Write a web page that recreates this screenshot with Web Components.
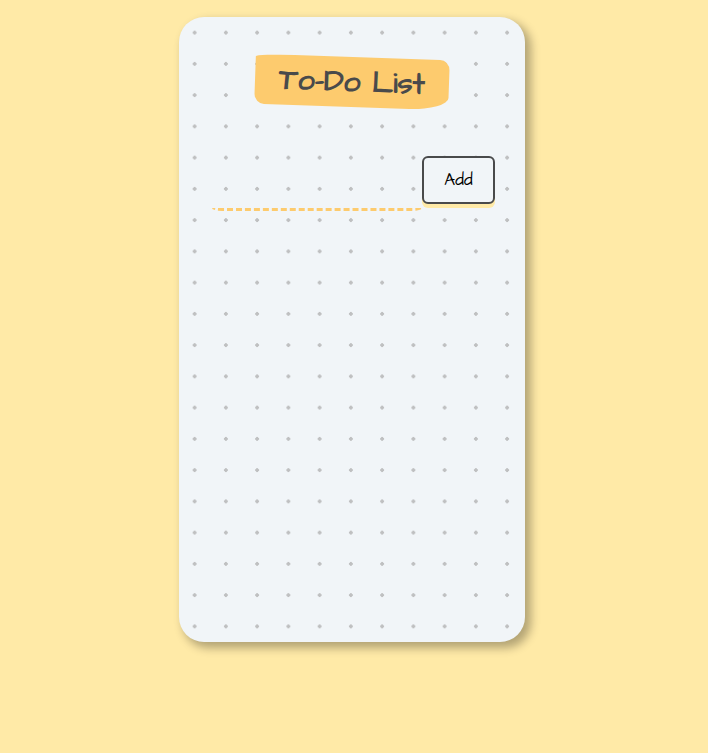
<!DOCTYPE html>
<html lang="en">
<head>
<meta charset="utf-8">
<meta name="viewport" content="width=device-width, initial-scale=1">
<title>To-Do List</title>
<style>
  body {
    margin: 0;
    min-height: 100vh;
    background: #ffeaa7;
    font-family: "Architects Daughter", "Patrick Hand", "Open Sans", sans-serif;
    color: #494a4b;
  }
</style>
</head>
<body>
<todo-app></todo-app>
<script>
  const define = (name, markup, setup) => {
    customElements.define(name, class extends HTMLElement {
      constructor() {
        super();
        this.attachShadow({ mode: 'open' }).innerHTML = markup;
        if (setup) setup(this);
      }
    });
  };

  define('todo-title', `
    <style>
      :host { display: flex; justify-content: center; }
      h1 {
        box-sizing: border-box;
        min-width: 194px;
        margin: 0;
        padding: 4px 20px;
        font-size: 30px;
        line-height: 42px;
        font-weight: 700;
        text-align: center;
        white-space: nowrap;
        background: #fdcb6e;
        border-radius: 20% 5% 20% 5% / 5% 20% 25% 20%;
        transform: rotate(2deg);
      }
    </style>
    <h1><slot></slot></h1>`);

  define('todo-form', `
    <style>
      :host { display: block; }
      form { display: flex; align-items: flex-start; padding-left: 3px; }
      input {
        box-sizing: border-box;
        flex: 1;
        min-width: 0;
        height: 55px;
        padding: 8px;
        border: 0;
        border-bottom: 3px dashed #fdcb6e;
        border-radius: 10px / 3px;
        outline: none;
        background: transparent;
        font: inherit;
        font-size: 20px;
        color: inherit;
      }
      button {
        box-sizing: border-box;
        width: 73px;
        height: 48px;
        padding: 0;
        border: 2px solid #494a4b;
        border-radius: 6px;
        background: #f1f5f8;
        box-shadow: 0 4px 0 #ffeaa7;
        font: inherit;
        font-size: 17px;
        color: #000;
        cursor: pointer;
      }
    </style>
    <form>
      <input type="text" aria-label="New task">
      <button type="submit">Add</button>
    </form>`, host => {
      const form = host.shadowRoot.querySelector('form');
      const input = form.querySelector('input');
      form.addEventListener('submit', event => {
        event.preventDefault();
        const text = input.value.trim();
        if (!text) return;
        host.dispatchEvent(new CustomEvent('add-task', { detail: text }));
        input.value = '';
      });
    });

  define('todo-app', `
    <style>
      :host { display: block; padding: 17px 20px 20px 16px; }
      main {
        --pitch: calc(125px / 4);
        box-sizing: border-box;
        max-width: 346px;
        min-height: 625px;
        margin: 0 auto;
        padding: 40px 30px;
        border-radius: 25px;
        background: #f1f5f8 radial-gradient(#bfc0c1 7.2%, transparent 0) 0 0 / var(--pitch) var(--pitch);
        box-shadow: 5px 5px 10px 1px rgba(0, 0, 0, .3);
      }
      todo-form { margin-top: 49px; }
      ul { margin: 24px 0 0; padding: 0 0 0 24px; font-size: 20px; }
    </style>
    <main>
      <todo-title>To-Do List</todo-title>
      <todo-form></todo-form>
      <ul></ul>
    </main>`, host => {
      const list = host.shadowRoot.querySelector('ul');
      host.shadowRoot.querySelector('todo-form').addEventListener('add-task', event => {
        const item = document.createElement('li');
        item.textContent = event.detail;
        list.append(item);
      });
    });
</script>
</body>
</html>
